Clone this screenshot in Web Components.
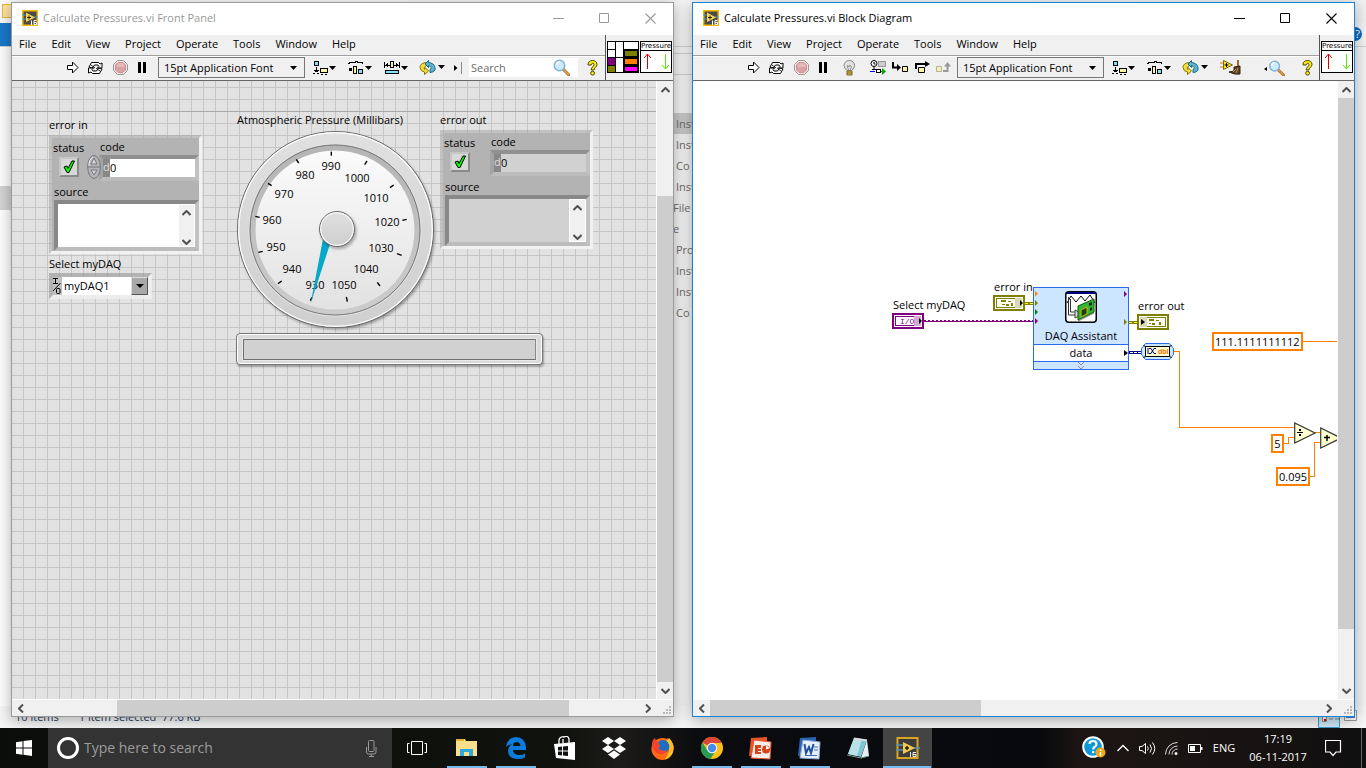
<!DOCTYPE html>
<html lang="en">
<head>
<meta charset="utf-8">
<title>Calculate Pressures.vi</title>
<style>
html, body { margin: 0; height: 100%; }
body { font: 11px/16px "Open Sans", "Noto Sans", sans-serif; color: #000; overflow: hidden; }
.at { position: absolute; }
</style>
</head>
<body>
<desk-top>
  <file-explorer slot="back"></file-explorer>
  <lv-window heading="Calculate Pressures.vi Front Panel" vscroll="98 485 0" hscroll="88 451 70" grid>
    <tool-bar slot="toolbar">
      <tool-button icon="run" size="m" label="Run"></tool-button>
      <tool-button icon="loop" size="m" label="Run Continuously"></tool-button>
      <tool-button icon="abort" size="l" label="Abort"></tool-button>
      <tool-button icon="pause" size="s" label="Pause"></tool-button>
      <font-select></font-select>
      <tool-button icon="align" size="xl" label="Align Objects"></tool-button>
      <tool-button icon="distribute" size="xl" label="Distribute Objects"></tool-button>
      <tool-button icon="resize" size="xl" label="Resize Objects"></tool-button>
      <tool-button icon="reorder" size="xl" label="Reorder"></tool-button>
      <tool-button icon="more" size="s" label="More"></tool-button>
      <tool-search></tool-search>
      <tool-button icon="help" size="m" label="Context Help"></tool-button>
    </tool-bar>
    <lv-icon name="pane" slot="corner"></lv-icon>
    <vi-badge slot="corner"></vi-badge>

    <panel-text class="at" style="left:37px;top:36px">error in</panel-text>
    <error-cluster class="at" style="left:37px;top:54px" input></error-cluster>
    <panel-text class="at" style="left:37px;top:175px">Select myDAQ</panel-text>
    <io-picker class="at" style="left:37px;top:192px"></io-picker>
    <panel-text class="at" style="left:225px;top:31px">Atmospheric Pressure (Millibars)</panel-text>
    <pressure-gauge class="at" style="left:221px;top:46px"></pressure-gauge>
    <status-bar class="at" style="left:224px;top:252px"></status-bar>
    <panel-text class="at" style="left:428px;top:31px">error out</panel-text>
    <error-cluster class="at" style="left:428px;top:49px"></error-cluster>
  </lv-window>

  <lv-window heading="Calculate Pressures.vi Block Diagram" vscroll="0 531 53" hscroll="0 271 340" active>
    <tool-bar slot="toolbar">
      <tool-button icon="run" size="m" label="Run"></tool-button>
      <tool-button icon="loop" size="m" label="Run Continuously"></tool-button>
      <tool-button icon="abort" size="l" label="Abort"></tool-button>
      <tool-button icon="pause" size="s" label="Pause"></tool-button>
      <tool-button icon="bulb" size="xl" label="Highlight Execution"></tool-button>
      <tool-button icon="retain" size="m" label="Retain Wire Values"></tool-button>
      <tool-button icon="into" size="m" label="Step Into"></tool-button>
      <tool-button icon="over" size="m" label="Step Over"></tool-button>
      <tool-button icon="out" size="m" label="Step Out"></tool-button>
      <font-select snug></font-select>
      <tool-button icon="align" size="xl" label="Align Objects"></tool-button>
      <tool-button icon="distribute" size="xl" label="Distribute Objects"></tool-button>
      <tool-button icon="reorder" size="xl" label="Reorder"></tool-button>
      <tool-button icon="clean" size="xl" label="Clean Up Diagram"></tool-button>
      <tool-button icon="find" size="xxl" label="Search"></tool-button>
      <tool-button icon="help" size="s" label="Context Help"></tool-button>
    </tool-bar>
    <vi-badge slot="corner"></vi-badge>

    <block-wires class="at" style="left:0;top:0"></block-wires>
    <panel-text class="at" style="left:200px;top:216px">Select myDAQ</panel-text>
    <lv-icon name="termio" class="at" style="left:199px;top:232px"></lv-icon>
    <panel-text class="at" style="left:301px;top:198px">error in</panel-text>
    <lv-icon name="termin" class="at" style="left:300px;top:214px"></lv-icon>
    <daq-node class="at" style="left:340px;top:206px"></daq-node>
    <panel-text class="at" style="left:445px;top:217px">error out</panel-text>
    <lv-icon name="termout" class="at" style="left:444px;top:233px"></lv-icon>
    <lv-icon name="convert" class="at" style="left:448px;top:262px"></lv-icon>
    <num-constant class="at" style="left:519px;top:251px">111.1111111112</num-constant>
    <num-constant class="at" style="left:578px;top:353px">5</num-constant>
    <num-constant class="at" style="left:583px;top:386px">0.095</num-constant>
    <lv-icon name="divide" class="at" style="left:601px;top:341px"></lv-icon>
    <lv-icon name="plus" class="at" style="left:627px;top:346px"></lv-icon>
  </lv-window>
  <task-bar slot="taskbar"></task-bar>
</desk-top>

<script>
const LV = `<rect x=".75" y=".75" width="14.500" height="14.500" fill="#4a4a4a" stroke="#f5b800" stroke-width="1.500"/><path d="M0 5h4M0 9h4M12 7h4" stroke="#3a9ad9"/><path d="M4 2.500v9.500l9-4.500z" fill="#f8d350"/><path d="M7 5.500v4M5 7.500h4" stroke="#222"/><path d="M9.500 10.500v4.500M14.500 10.500h-2.500v4h2.500v-2h-2.500" stroke="#fff" fill="none"/>`;
const GLASS = `<path d="M10 10l6 6" stroke="#b06a28" stroke-width="3" stroke-linecap="round"/><path d="M10 10l6 6" stroke="#e8a850" stroke-width="1.200"/><circle cx="6.500" cy="6.500" r="5.200" fill="#cfeafc" stroke="#7cb4dc" stroke-width="1.500"/><path d="M3.500 6a3 3 0 0 1 3-3" stroke="#fff" stroke-width="1.500" fill="none"/>`;
const ERR = c => `<rect x="1" y="1" width="30" height="14" fill="#fff" stroke="${c}" stroke-width="2"/><rect x="3.500" y="3.500" width="25" height="9" fill="#fff" stroke="${c}"/>`;
// name: [width, height, markup]
const ICONS = {
 lv: [16,16,LV],
 run: [12,13,`<path d="M.5 4.500h5v-3.500l5.500 5.500-5.500 5.500v-3.500h-5z" fill="#fff" stroke="#000"/>`],
 loop: [17,14,`<path d="M2 6l2.500-4.500h7l1.500 1.500 2-1v5H10.500l1.500-1.500-1-1.500H7.500L5.500 7z" fill="#fff" stroke="#000"/><path d="M15 8l-2.500 4.500h-7L4 11l-2.500 1V7H6.500L5 8.500 6 10h3.500L11.500 7z" fill="#fff" stroke="#000"/><path d="M4 4l4 3M9 7l4 3" stroke="#000" stroke-width=".8"/>`],
 abort: [15,15,`<path d="M4.500.5h6l4 4v6l-4 4h-6l-4-4v-6z" fill="#f4e4e4" stroke="#999"/><path d="M5 2.500h5l2.500 2.500v5L10 12.500H5L2.500 10V5z" fill="#dba2a4" stroke="#cf9498"/><path d="M4 5l2-2h3.500l2 2v2H4z" fill="#e8b9bb"/>`],
 pause: [10,11,`<path d="M1 0h3v11H1zM6 0h3v11H6z"/>`],
 align: [23,14,`<g shape-rendering="crispEdges"><path d="M1.500.5h4v4h-4z" fill="#7fe3fb" stroke="#000"/><path d="M7.500 7.500h7v4h-7z" fill="#fdf59c" stroke="#000"/><path d="M3 6h1v3h2v1H5v1H2v-1H1V9h2zM0 12h2v1H0zM4 12h2v1H4zM8 13h2v1H8zM12 13h2v1h-2z"/></g><path d="M16 5h7l-3.500 4z"/>`],
 distribute: [24,14,`<g shape-rendering="crispEdges" fill="none" stroke="#000"><path d="M.5 2.500L2.500 1.500H7V.5h2v1h4.500l2 1"/><path d="M5.500 5.500h3v7h-3z" fill="#fdf59c"/><path d="M10.500 8.500h4v4h-4z" fill="#7fe3fb"/><path d="M1 7h3v3H1z" fill="#000" stroke="none"/></g><path d="M17 5h7l-3.500 4z"/>`],
 resize: [24,14,`<g shape-rendering="crispEdges"><path d="M6.500.5h3v6h-3z" fill="#fdf59c" stroke="#000"/><path d="M.5 1v6M15.500 1v6M1 4h5M10 4h5" stroke="#000"/><path d="M4 2v4L1 4zM12 2v4l3-2z"/><path d="M1.500 9.500h13v2.500h-13z" fill="#7fe3fb" stroke="#000"/></g><path d="M17 5h7l-3.500 4z"/>`],
 reorder: [26,15,`<path d="M7.500 2.500Q1 3 1 7.500q.5 4 4.500 4.500v2.500L9.500 11 6 7.500v2Q3.500 8 7.500 5.500z" fill="#f3df3c" stroke="#857400"/><path d="M9.500 5.500v2L6 4l3.500-3.500V2.500q5.500.5 6.500 5t-5 5V9.500q3-2-1.500-4z" fill="#5cb6d0" stroke="#176b86"/><path d="M19 5h7l-3.500 4z"/>`],
 more: [8,12,`<path d="M0 3v6l3.500-3z"/><path d="M7.500 0v12" stroke="#888"/>`],
 help: [11,16,`<path d="M1 4.500C1 2 3 .5 5.500.5S10 2 10 4.500C10 7 7 7.500 7 10H4.200C4.200 7 7 6.500 7 4.500 7 2.800 4.200 2.800 4.200 5H1z" fill="#f9ec1c" stroke="#4b4500"/><circle cx="5.600" cy="13.200" r="1.900" fill="#f9ec1c" stroke="#4b4500"/>`],
 bulb: [13,16,`<path d="M4 10.500Q1 8 1 5.500a5.300 5 0 0 1 10.600 0Q11.600 8 8.700 10.500z" fill="#e2e2e2" stroke="#888"/><path d="M4.500 5l1.500 2 1-2 1.500 2-1.500 4h-1L4.500 7z" fill="none" stroke="#999"/><path d="M4 11h5v4H4z" fill="#e9c238" stroke="#74632a"/><path d="M4 13h5" stroke="#74632a"/>`],
 retain: [17,15,`<g shape-rendering="crispEdges"><path d="M8.500 1.500h7v5h-7z" fill="#ccc" stroke="#999"/><path d="M0 11.500h5" stroke="#00f"/><path d="M6.500 9.500h4v3h-4z" fill="#fff" stroke="#000"/><path d="M11 11.500h2" stroke="#00a000"/></g><path d="M12 8v7l4-3.500z" fill="#00a000"/><circle cx="4" cy="3.500" r="3" fill="#fff" stroke="#000"/><path d="M4 2v2h1.500M4 7v3M2 9.500h4" stroke="#000" fill="none"/>`],
 into: [17,11,`<path d="M1 0v5.500h6" fill="none" stroke="#000" stroke-width="2"/><path d="M5 2v7l4-3.500z"/><path d="M10.500 4.500h5v5h-5z" fill="#fdf59c" stroke="#000"/>`],
 over: [15,13,`<path d="M1 8V3h10" fill="none" stroke="#000" stroke-width="2"/><path d="M10 0v6l5-3z"/><path d="M3.500 6.500h6v5h-6z" fill="#fdf59c" stroke="#000"/>`],
 out: [16,11,`<path d="M7 9h4.500V3" fill="none" stroke="#999" stroke-width="2"/><path d="M8 4.500h7L11.500 0z" fill="#999"/><path d="M.5 4.500h5v5h-5z" fill="#f4eebc" stroke="#b8b48e"/>`],
 clean: [22,15,`<path d="M0 3h4M0 7h4" stroke="#e87800"/><path d="M18 0v7" stroke="#a06a30" stroke-width="2"/><path d="M14 7l6-1v8q-5 1-11-2l5-1z" fill="#5d4222" stroke="#33220f"/><path d="M13 12l3-3M16 13l2-5" stroke="#c09560"/><path d="M3.500.5v9l9-4.500z" fill="#fbe52c" stroke="#7c6700"/><path d="M6.500 3v4M4.500 5h4" stroke="#000"/>`],
 find: [21,16,`<path d="M3 7v4L0 9z"/><g transform="translate(4.500 0)scale(.94)">${GLASS}</g>`],
 glass: [17,17,GLASS],
 pane: [32,32,`<path d="M0 0h32v32H0z"/><g fill="#fff"><path d="M1 1h7v7H1zM1 9h7v7H1zM9 1h7v15H9zM9 17h7v14H9zM17 1h14v7H17z"/></g><path d="M1 17h7v7H1z" fill="#800080"/><path d="M1 25h7v6H1zM18 10h12v5H18z" fill="#808000"/><path d="M18 18h12v5H18z" fill="#ff8000"/><path d="M18 26h12v4H18z" fill="#f0f"/>`],
 check: [12,14,`<path d="M1 7l3-1 1 2.500L9 1h2.500L6 12.500H4z" fill="#0f0" stroke="#000"/>`],
 spin: [14,24,`<ellipse cx="7" cy="12" rx="6.300" ry="11.500" fill="#b2b4ba" stroke="#74767c"/><path d="M1 12h12" stroke="#777"/><path d="M4 9l3-6 3 6zM4 15l3 5 3-5z" fill="#d6d6da" stroke="#777"/><path d="M2 11q-.5-6 4-9" stroke="#eee" fill="none"/>`],
 io: [9,17,`<path d="M0 .5h5M2.500 0v5M0 5.500h5M0 13L7.500 5" stroke="#000" fill="none"/><rect x="3.500" y="10.500" width="3.500" height="5" rx="1" fill="none" stroke="#000"/>`],
 termio: [32,16,`<rect x="1" y="1" width="30" height="14" fill="#fff" stroke="#800080" stroke-width="2"/><rect x="3.500" y="3.500" width="25" height="9" fill="#fff" stroke="#800080"/><path d="M22 3h7v10h-7z" fill="#d3a8d3"/><path d="M27 5v6l3-3z"/><text x="8" y="11" font-family="Liberation Mono, monospace" font-size="8" fill="#800080">I/O</text>`],
 termin: [32,16,ERR('#808000')+`<path d="M22 3h7v10h-7z" fill="#d9d9b4"/><path d="M27 5v6l3-3z"/><path d="M8 5h5v2H8zM15 6h3v1h-3zM9 9h3v1H9zM13 9h3v2h-3zM18 8h2v3h-2z" fill="#808000"/>`],
 termout: [32,16,ERR('#808000')+`<path d="M3 3h7v10H3z" fill="#d9d9b4"/><path d="M4 5v6l4-3z"/><path d="M12 5h5v2h-5zM19 6h3v1h-3zM12 9h2v1h-2zM15 9h3v2h-3zM22 8h2v3h-2z" fill="#808000"/>`],
 convert: [33,17,`<path d="M4.500.5h24l4 5v6l-4 5h-24l-4-5v-6z" fill="#cce6ff" stroke="#2c6af0"/><path d="M4.500 3.500h24v10h-24z" fill="#ffffcf" stroke="#000"/><path d="M2.500 2L4.500 4v9L2.500 15M30.500 2L28.500 4v9l2 2" stroke="#000" fill="none"/><path d="M8 5.500h2l3 5h2M8 10.500h2l3-5h2M7 5v6" stroke="#00007a" fill="none"/><text x="17" y="11" font-family="Liberation Sans, sans-serif" font-size="7" font-weight="bold" fill="#ff6a00">dbl</text>`],
 divide: [22,22,`<path d="M.7 1v20L21 11z" fill="#ffffcf" stroke="#3a3a3a" stroke-width="1.200"/><path d="M3 10.500h6" stroke="#000"/><path d="M5 7h2v2H5zM5 12h2v2H5z"/>`],
 plus: [22,22,`<path d="M.7 1v20L21 11z" fill="#ffffcf" stroke="#3a3a3a" stroke-width="1.200"/><path d="M4 10.500h6M7 8v6" stroke="#000" stroke-width="1.500"/>`],
 daq: [32,32,`<rect x=".75" y=".75" width="30.500" height="30.500" rx="3" fill="#fff" stroke="#000" stroke-width="1.500"/><path d="M2 1h28v2H2z" fill="#000080"/><path d="M2 12l4-7 5 6 5-6 4 5 5-6 5 8" fill="none" stroke="#000"/><path d="M3.500 6v18h7M5.500 8v13h5" fill="none" stroke="#333"/><path d="M10 19l4 2v4l-4 2z" fill="#ddd" stroke="#444"/><path d="M13 15l16-7v13l-16 8z" fill="#35b535" stroke="#055a05"/><path d="M16 19l6-3v7l-6 3z" fill="#141" stroke="#e0b000"/><path d="M24 12l3-1v3l-3 1zM25 17l2-1v3l-2 1z" fill="#222"/><path d="M13 30l16-8" stroke="#777"/>`],
 min: [11,11,`<path d="M0 5.500h11" stroke="currentColor"/>`],
 max: [11,11,`<path d="M.5.5h9v9h-9z" fill="none" stroke="currentColor"/>`],
 close: [11,11,`<path d="M.5.5l10 10M10.500.5l-10 10" stroke="currentColor" stroke-width="1.100"/>`],
 start: [16,16,`<path d="M0 2.300l6.500-1v6.200H0zM7.500 1.100L16 0v7.500H7.500zM0 8.500h6.500v6.200L0 13.700zM7.500 8.500H16V16l-8.500-1.200z" fill="#fff"/>`],
 mic: [11,17,`<rect x="2.500" y=".5" width="5.500" height="11" rx="1" fill="none" stroke="#999"/><path d="M.5 7v5q0 2 2 2H8q2 0 2-2V7M5.200 14v3M3 16.500h5" fill="none" stroke="#999"/>`],
 view: [20,14,`<path d="M4.500.5h11v13h-11zM2.500 2.500h-2v9h2M17.500 2.500h2v9h-2" fill="none" stroke="#fff"/>`],
 folder: [22,20,`<path d="M0 1h9l1 2h11v15H0z" fill="#fbe08c"/><path d="M0 1h8v2H0z" fill="#e2b13c"/><path d="M4 18v-7h13v7h-4v-4H8v4z" fill="#2ea9e0"/>`],
 edge: [20,22,`<path d="M0 10Q1 1 10 0q9 .5 10 10v3H7q0 4 5 5 4 .5 7-1.500v4Q16 22 11 22 2 21 2 14q0-4 4-7-4 1-6 3zM7 9h7.500Q14 5 10.500 5T7 9z" fill="#0d7bdc"/>`],
 store: [21,24,`<path d="M0 8l21-2v18L2 22z" fill="#fff"/><path d="M5 8V4q1-4 5-3 4-2 5 2v4M9 7V3" fill="none" stroke="#fff" stroke-width="1.300"/><path d="M4 11l4-.5v4H4zM9 10.500l5-.5v4.500H9zM4 15.500h4v4L4 19zM9 15.500h5V20l-5-.5z" fill="#111"/>`],
 dropbox: [24,22,`<path d="M6 0l6 4-6 4-6-4zM18 0l6 4-6 4-6-4zM6 8l6 4-6 4-6-4zM18 8l6 4-6 4-6-4zM12 13.500l6 4-6 4.500-6-4.500z" fill="#fff"/>`],
 firefox: [23,23,`<circle cx="11.500" cy="12" r="11" fill="#ff6a13"/><path d="M18 1q5 5 4.500 11-1 8-9 10.500Q22 14 15 5z" fill="#ffd42a"/><circle cx="12" cy="9.500" r="6.500" fill="#1a6fc4"/><path d="M1 7Q1 3 4 1l1 3q2 0 3 2-1 2 2 2l-2 2v2q3 3 8 1-2 5-8 4-6-2-7-10z" fill="#f7432b"/><path d="M16 1q3 4 3 9 0 5-4 8 8-2 7.500-9Q21 4 16 1z" fill="#ffb62a"/>`],
 chrome: [22,22,`<circle cx="11" cy="11" r="11" fill="#fbc116"/><path d="M11 11L1.500 5.500A11 11 0 0 1 20.500 5.500L21 6H11z" fill="#dc4437"/><path d="M1.500 5.500A11 11 0 0 0 9.500 22L15 13H6z" fill="#279b56"/><circle cx="11" cy="11" r="5.200" fill="#fff"/><circle cx="11" cy="11" r="4.200" fill="#4a89ee"/>`],
 ppt: [24,23,`<path d="M2 1l16-1v17L0 19z" fill="#e8532a"/><path d="M5 3l17 2-1 17-19-1z" fill="#f9eee8" stroke="#e8532a"/><path d="M6 8h6v3H9v1h3v2H9v1h3v2H6z" fill="#d6421c"/><circle cx="17" cy="12.500" r="4" fill="#d6421c"/><path d="M17 12.500V8.500l4 2.500z" fill="#fff"/>`],
 word: [24,23,`<path d="M2 1l16-1v17L0 19z" fill="#2d62b5"/><path d="M5 3l17 2-1 17-19-1z" fill="#e9f0fa" stroke="#88a9d8"/><path d="M6.500 7l1.500 9 3-6 2 6 2.500-9" fill="none" stroke="#1f4f9f" stroke-width="2"/><path d="M16 10h4M16 13h4M7 18.500h12" stroke="#3b6cb8"/>`],
 note: [23,22,`<path d="M7 1l13 2-6 17L1 17z" fill="#7fc4d4"/><path d="M7 1l8 1-5 17-9-2z" fill="#b9e2e8"/><path d="M20 3l2 16-8 2z" fill="#e5eef0"/><path d="M0 18l14 3 8-2" stroke="#798" fill="none"/><path d="M7 1.500l13 2" stroke="#d8dede" stroke-width="2"/>`],
 lvbig: [24,22,`<rect x="1.500" y="1" width="20" height="20" fill="#3c3c3c" stroke="#d9a520" stroke-width="2"/><path d="M0 8h7M0 13h7M17 11h7" stroke="#4a90b8" stroke-width="1.500"/><path d="M7 5v12l12-6z" fill="#f2c94c"/><path d="M9 11h4M11 9v4" stroke="#222" stroke-width="1.500"/><path d="M14.500 15v5M20 15.500h-3v4h3v-2h-3" stroke="#eee" fill="none"/>`],
 q: [25,24,`<circle cx="11" cy="11" r="9.800" fill="#0c97d8" stroke="#fff" stroke-width="2"/><path d="M7.500 8q0-3 3.500-3t3.500 3q0 2-2 3-1.200.6-1.200 2.500M11.200 15v2.200" fill="none" stroke="#fff" stroke-width="2.200"/><circle cx="18.500" cy="16.500" r="5" fill="#f0a818"/><path d="M18.500 13.500v1.500M18.500 16v4" stroke="#fff" stroke-width="1.500"/>`],
 up: [12,8,`<path d="M.5 7L6 1.500 11.500 7" fill="none" stroke="#fff" stroke-width="1.300"/>`],
 vol: [17,13,`<path d="M.5 4.500H3l3.500-3v10L3 8.500H.5z" fill="none" stroke="#fff"/><path d="M8.500 4.500q1.500 2 0 4M11 2.500q3 4 0 8M13.500.5q4.500 6 0 12" fill="none" stroke="#fff"/>`],
 wifi: [13,13,`<path d="M.5 12.500A12 12 0 0 1 12.500.5M4 12.500A8.500 8.500 0 0 1 12.500 4M7 12.500A5.500 5.500 0 0 1 12.500 7" fill="none" stroke="#ddd"/><circle cx="11" cy="11.500" r="1.500" fill="#fff"/>`],
 bat: [15,9,`<path d="M.5.5h12v8H.5z" fill="none" stroke="#fff"/><path d="M2 2h5v5H2zM13 3h1.500v3H13z" fill="#fff"/>`],
 note2: [17,17,`<path d="M.5.5h15v11.500h-4.500L8 15.500 5 12H.5z" fill="none" stroke="#fff" stroke-width="1.200"/>`],
 au: [9,6,`<path d="M.5 5l4-4 4 4" fill="none" stroke="#505050" stroke-width="2"/>`],
 ad: [9,6,`<path d="M.5 1l4 4 4-4" fill="none" stroke="#505050" stroke-width="2"/>`],
 al: [6,9,`<path d="M5 .5l-4 4 4 4" fill="none" stroke="#505050" stroke-width="2"/>`],
 ar: [6,9,`<path d="M1 .5l4 4-4 4" fill="none" stroke="#505050" stroke-width="2"/>`],
 grip: [9,9,`<path d="M6 0h2v2H6zM3 3h2v2H3zM6 3h2v2H6zM0 6h2v2H0zM3 6h2v2H3zM6 6h2v2H6z" fill="#b8b8b8"/>`],
};
const svg = n => { const [w,h,m] = ICONS[n]; return `<svg width="${w}" height="${h}" viewBox="0 0 ${w} ${h}" aria-hidden="true">${m}</svg>`; };
const BASE = `*{box-sizing:border-box} :host{display:block;box-sizing:border-box} svg{display:block;flex:none} button,input,select,textarea{font:inherit;color:inherit;border:0;margin:0;padding:0;background:none;border-radius:0;outline:0}`;
function define(name, css, html) {
  customElements.define(name, class extends HTMLElement {
    constructor() { super(); this.attachShadow({ mode: 'open' }); }
    connectedCallback() {
      this.shadowRoot.innerHTML = `<style>${BASE}${css}</style>` + (typeof html === 'function' ? html(this) : html);
    }
  });
}

define('lv-icon', ``, e => svg(e.getAttribute('name')));

define('desk-top', `
 :host{position:relative;display:grid;grid-template-rows:1fr 40px;height:100vh;overflow:hidden}
 .back{position:absolute;inset:0 0 40px 0}
 .windows{position:relative;display:grid;grid-template-columns:1fr 1fr;gap:18px;padding:2px 11px 11px;min-height:0}
 .bar{position:relative}`,
 `<div class="back"><slot name="back"></slot></div><div class="windows"><slot></slot></div><div class="bar"><slot name="taskbar"></slot></div>`);

define('file-explorer', `
 :host{height:100%;position:relative;background:#fff;display:grid;grid-template-rows:23px 23px 1fr 22px;overflow:hidden}
 .top{background:linear-gradient(90deg,#fafafa,#f0f0f0)} .ribbon{background:linear-gradient(90deg,#1979ca 0 12px,#f3f3f3 12px)}
 .body{display:grid;grid-template-columns:11px 1fr 11px;position:relative;border-top:1px solid #d0d0d0}
 .mark{position:absolute;left:2px;top:4px;width:12px;height:14px;background:#fbe3a0;border:1px solid #e8b83c}
 .tree{padding-top:139px} .tree i{display:block;height:24px;background:#d4d4d4}
 .list{margin-left:662px;width:40px;color:#6d6d6d;background:#f3f3f3;padding-top:66px;position:relative}
 .list div{line-height:21px;padding-left:3px} .list .sel{background:#c9c9c9} .list .out{padding-left:0}
 .rule{position:absolute;left:0;width:40px;height:1px;background:#cfcfcf;top:6px} .rule.b{top:27px}
 .side{background:#f3f3f3}
 .q{position:absolute;right:4px;top:27px;width:14px;height:14px;border-radius:7px;background:#1068c0;color:#fff;line-height:14px;text-align:right;padding-right:2px}
 .status{display:flex;gap:20px;padding-left:15px;color:#1e395b;line-height:16px;align-items:flex-start;background:#f6f6f6}
 .status span{margin-top:3px;white-space:pre}
 .views{margin-left:auto;margin-right:8px}`,
 `<div class="top"><div class="mark"></div></div><div class="ribbon"></div>
 <div class="body"><div class="tree"><i></i></div>
 <div class="list"><div class="rule"></div><div class="rule b"></div>
 <div class="sel">Inst</div><div>Inst</div><div>Co</div><div>Inst</div><div class="out">File</div><div class="out">e</div><div>Pro</div><div>Inst</div><div>Inst</div><div>Co</div></div><div class="side"></div></div>
 <div class="q">?</div>
 <div class="status"><span>10 items</span><span>1 item selected  77.6 KB</span><svg class="views" width="40" height="22"><path d="M.5.500h21v21H.5z" fill="#cde8f7" stroke="#3a9ad0"/><path d="M4.500 8.500h4v7h-4zM11 13h4M17 13h4" fill="#fff" stroke="#888"/><path d="M6 13h2v2H6z" fill="#d00"/><path d="M26.500 4.500h12v10h-12z" fill="#fff" stroke="#999"/><path d="M28 6h9v6h-9z" fill="#4a80bb"/></svg></div>`);

define('scroll-bar', `
 :host{display:flex;background:#f0f0f0}
 button{width:17px;height:17px;display:flex;align-items:center;justify-content:center;flex:none}
 .track{flex:1;display:flex} .thumb{background:#cdcdcd}
 :host([dir=v]),:host([dir=v]) .track{flex-direction:column}
 :host([dir=v]) button{width:auto} :host([dir=h]) button{height:auto}`,
 e => { const v = e.getAttribute('dir') === 'v', [a,b,c] = e.getAttribute('parts').split(' ');
  return `<button aria-label="Back">${svg(v?'au':'al')}</button><div class="track"><div style="flex:${a} 0 0"></div><div class="thumb" style="flex:${b} 0 0"></div><div style="flex:${c} 0 0"></div></div><button aria-label="Forward">${svg(v?'ad':'ar')}</button>`; });

define('lv-window', `
 :host{display:grid;grid-template-rows:32px auto 1fr 17px;border:1px solid #9a9a9a;background:#fff;box-shadow:0 3px 14px rgba(0,0,0,.32);min-width:0;overflow:hidden}
 :host([active]){border-color:#1883d7}
 .title{display:flex;align-items:center;padding:0 0 2px 10px;color:#999}
 :host([active]) .title{color:#000}
 .title h1{font:inherit;margin:0 auto 0 5px;white-space:nowrap}
 .title button{width:46px;height:30px;display:flex;align-items:center;justify-content:center}
 .head{display:grid;grid-template-columns:1fr auto;background:#f0f0f0;border-bottom:1px solid #666}
 nav{display:flex;gap:15px;padding-left:7px;height:21px;border-bottom:1px solid #a0a0a0;line-height:18px}
 nav a{color:#000;text-decoration:none}
 .corner{grid-column:2;grid-row:1/3;display:flex;gap:1px;border-left:1px solid #555;padding:6px 1px 0}
 .view{display:grid;grid-template-columns:1fr 16px;min-height:0}
 .canvas{position:relative;overflow:hidden;border-right:1px solid #fff}
 :host([grid]) .canvas{background:linear-gradient(#a9a9a9,#a9a9a9) 0 30px/100% 1px no-repeat,repeating-linear-gradient(90deg,transparent 0 11px,#c6c6c6 11px 12px),repeating-linear-gradient(transparent 0 6px,#c6c6c6 6px 7px,transparent 7px 12px),#e2e2e2}
 .foot{display:grid;grid-template-columns:1fr 17px;border-top:1px solid #fff;background:#f0f0f0;align-items:stretch}
 .grip{display:flex;align-items:flex-end;justify-content:flex-end;padding:0 1px 1px 0}`,
 e => `<div class="title">${svg('lv')}<h1>${e.getAttribute('heading')}</h1><button aria-label="Minimize">${svg('min')}</button><button aria-label="Maximize">${svg('max')}</button><button aria-label="Close">${svg('close')}</button></div>
 <div class="head"><nav>${['File','Edit','View','Project','Operate','Tools','Window','Help'].map(t=>`<a href="#">${t}</a>`).join('')}</nav><slot name="toolbar"></slot><div class="corner"><slot name="corner"></slot></div></div>
 <div class="view"><div class="canvas"><slot></slot></div><scroll-bar dir="v" parts="${e.getAttribute('vscroll')}"></scroll-bar></div>
 <div class="foot"><scroll-bar dir="h" parts="${e.getAttribute('hscroll')}"></scroll-bar><div class="grip">${svg('grip')}</div></div>`);

define('tool-bar', `:host{display:flex;align-items:center;height:24px;padding:0 0 2px 50px;border-top:1px solid #fff;min-width:0}`, `<slot></slot>`);
define('tool-button', `
 :host{flex:none;width:22px} :host([size=s]){width:16px} :host([size=l]){width:28px} :host([size=xl]){width:36px} :host([size=xxl]){width:50px}
 button{width:100%;height:20px;display:flex;align-items:center;justify-content:center}`,
 e => `<button aria-label="${e.getAttribute('label')}">${svg(e.getAttribute('icon'))}</button>`);
define('font-select', `
 :host{position:relative;flex:none;width:147px;height:21px;margin:0 1px 0 8px;border:1px solid #777}
 :host([snug]){margin-left:2px}
 select{appearance:none;width:100%;height:19px;padding:0 0 0 5px;line-height:18px;display:block}
 svg{position:absolute;right:6px;top:8px;pointer-events:none}`,
 `<select aria-label="Text Settings"><option>15pt Application Font</option></select><svg width="8" height="5"><path d="M0 0h7L3.500 4z"/></svg>`);
define('tool-search', `
 :host{display:flex;align-items:center;flex:none;width:109px;height:19px;margin:0 3px;background:#fff;padding:0 8px 0 2px}
 input{width:82px;flex:1;line-height:18px} input::placeholder{color:#6d6d6d;opacity:1}`,
 `<input aria-label="Search" placeholder="Search">${svg('glass')}`);
define('vi-badge', `
 :host{width:32px;height:32px;border:1px solid #000;background:#fff;display:flex;flex-direction:column}
 span{font:7px/8px "DejaVu Sans",sans-serif;border-bottom:1px solid #000;height:9px;text-align:center}`,
 `<span>Pressure</span><svg width="30" height="21"><path d="M6.500 18V3M3 7l3.500-4L10 7" fill="none" stroke="#d40000"/><path d="M24.500 3v15M21 14l3.500 4 3.500-4" fill="none" stroke="#5ce600"/></svg>`);

define('panel-text', `:host{white-space:nowrap}`, `<slot></slot>`);
define('error-cluster', `
 :host{width:153px;height:119px;border:3px solid;border-color:rgba(170,170,170,.6) rgba(245,245,245,.85) rgba(245,245,245,.85) rgba(170,170,170,.6);background:#b3b3b3;background-clip:padding-box;display:flex;flex-direction:column}
 .row{display:grid;grid-template-columns:35px 12px minmax(0,1fr)}
 .st{padding:2px 0 0 1px} .cd{grid-column:3;padding-top:1px}
 .cd label{padding-left:1px}
 .led{display:flex;width:20px;height:20px;align-items:center;justify-content:center;margin:1px 0 0 6px;background:#d8d8d8;border:2px solid;border-color:#c6c6c6 #8a8a8a #8a8a8a #c6c6c6}
 .sp{position:absolute;z-index:1;margin:17px 0 0 35px}
 .num{display:flex;height:26px;border:4px solid;border-color:#909090 #c2c2c2 #bcbcbc #a4a4a4;background:#888;}
 .num i{font-style:normal;color:#ddd;width:7px;line-height:16px}
 .num input{flex:1;min-width:0;background:#fff;padding-left:0;height:18px;line-height:18px}
 .src{padding-left:2px;line-height:16px;margin-top:3px}
 .box{flex:1;margin-left:2px;display:flex;border:4px solid;border-color:#888 #c2c2c2 #bcbcbc #888;background:#fff;min-height:0}
 textarea{flex:1;min-width:0;resize:none;overflow:hidden} .box div{width:17px;background:#f0f0f0;display:flex;flex-direction:column;align-items:center;justify-content:space-between;padding:5px 0 1px;border:1px solid #fff}
 :host(:not([input])) .num input,:host(:not([input])) .box{background:#d1d1d1}`,
 e => `<div class="row"><div class="st"><label>status</label><div class="led" role="img" aria-label="no error">${svg('check')}</div></div>${e.hasAttribute('input')?`<span class="sp">${svg('spin')}</span>`:''}<div class="cd"><label for="c">code</label><div class="num"><i>d</i><input id="c" value="0"${e.hasAttribute('input')?'':' readonly'}></div></div></div>
 <label class="src" for="t">source</label><div class="box"><textarea id="t"${e.hasAttribute('input')?'':' readonly'}></textarea><div>${svg('au')}${svg('ad')}</div></div>`);
define('io-picker', `
 :host{display:flex;width:103px;height:26px;border:4px solid;border-color:rgba(160,160,160,.7) rgba(240,240,240,.8) rgba(240,240,240,.8) rgba(160,160,160,.7);background:#c2c2c2;background-clip:padding-box}
 svg{margin:1px 0 0 0} select{appearance:none;flex:1;min-width:0;background:#fff;padding-left:2px;height:18px}
 .d{width:17px;height:18px;background:#a8a8a8;border:1px solid;border-color:#ddd #555 #555 #ddd;display:flex;align-items:center;justify-content:center;pointer-events:none}`,
 `${svg('io')}<select aria-label="Select myDAQ"><option>myDAQ1</option></select><div class="d"><svg width="8" height="5"><path d="M0 0h8L4 4z"/></svg></div>`);
define('status-bar', `
 :host{width:307px;height:32px;padding:5px 6px 4px;border:1px solid #777;border-radius:4px;background:#dadada;box-shadow:inset 0 0 0 1px #fff,1px 2px 2px rgba(0,0,0,.3)}
 div{height:100%;border:1px solid #707070;border-right-color:#888;background:#d1d1d1;box-shadow:0 0 0 1px #e9e9e9}`, `<div></div>`);

const TICKS = [[304,140,304,152],[199,163,206,174],[114,235,125,242],[76,334,89,337],[85,442,98,439],[144,536,155,528],[241,587,246,577],[349,576,352,590],[442,532,450,543],[501,446,515,451],[517,346,530,343],[480,248,491,240],[404,179,411,168]];
const NUMS = [[990,331,166],[980,305,175],[970,284,194],[960,272,220],[950,276,247],[940,292,269],[930,315,285],[1050,344,285],[1040,366,269],[1030,381,248],[1020,387,222],[1010,376,198],[1000,357,178]];
define('pressure-gauge', `text{font-size:11px;text-anchor:middle}`,
 `<svg width="208" height="208" viewBox="233 127 208 208" role="img" aria-label="Atmospheric pressure">
 <defs><linearGradient id="g" x1="0" y1="0" x2="0" y2="1"><stop offset="0" stop-color="#e0e0e0"/><stop offset="1" stop-color="#cfcfcf"/></linearGradient>
 <linearGradient id="f" x1="0" y1="0" x2="0" y2="1"><stop offset="0" stop-color="#fbfbfb"/><stop offset="1" stop-color="#e2e2e2"/></linearGradient>
 <linearGradient id="r" x1="0" y1="0" x2="0" y2="1"><stop offset="0" stop-color="#b4b4b4"/><stop offset="1" stop-color="#cdcdcd"/></linearGradient>
 <filter id="b" x="-20%" y="-20%" width="140%" height="140%"><feGaussianBlur stdDeviation="1.500"/></filter></defs>
 <circle cx="337" cy="231.500" r="98" fill="#000" opacity=".35" filter="url(#b)"/>
 <circle cx="335.500" cy="229.500" r="98" fill="url(#g)" stroke="#666"/><circle cx="335.500" cy="229.500" r="96.800" fill="none" stroke="#fff" stroke-width="1.200"/>
 <circle cx="335" cy="230" r="86" fill="url(#r)" stroke="#e6e6e6"/><circle cx="335" cy="230" r="85" fill="none" stroke="#777"/>
 <circle cx="335" cy="230" r="79.500" fill="url(#f)"/>
 ${TICKS.map(([a,b,c,d])=>`<path d="M${230+a/3} ${105+b/3}L${230+c/3} ${105+d/3}" stroke="#000" stroke-width="1.400"/>`).join('')}
 ${NUMS.map(([n,x,y])=>`<text x="${x}" y="${y+4}">${n}</text>`).join('')}
 <path d="M323 239l7 5L310.500 304z" fill="#06a9c7"/>
 <circle cx="338.500" cy="231" r="18" opacity=".3" filter="url(#b)"/><circle cx="337" cy="229" r="17.500" fill="#fff" stroke="#666"/><circle cx="337" cy="229" r="15.800" fill="url(#g)"/></svg>`);

define('block-wires', ``, `<svg width="645" height="617" viewBox="693 81 645 617" fill="none" shape-rendering="crispEdges">
 <path d="M924 321.500H1033" stroke="#800080"/><path d="M924 320.500H1033" stroke="#800080" stroke-dasharray="2 2"/>
 <path d="M1025 303.500h8M1129 322.500h8" stroke="#808000" stroke-width="3"/><path d="M1025 303.500h8M1129 322.500h8" stroke="#ff0" stroke-dasharray="3 2"/>
 <path d="M1129 352.500h13" stroke="#000080" stroke-width="3"/><path d="M1130 352.500h12" stroke="#fff" stroke-dasharray="3 1"/>
 <g stroke="#ff8000"><path d="M1174 351.500h5.500v76H1294M1284 443.500h4.500v-6h5.500M1315 432.500h5M1310 476.500h4.500v-34h5.500M1300 341.500h37"/></g></svg>`);
define('daq-node', `
 :host{width:96px;height:83px;border:1px solid #2c6af0;background:#cce6ff;display:flex;flex-direction:column;text-align:center}
 .top{flex:1;display:flex;flex-direction:column;align-items:center;padding-top:3px} .data{height:18px;line-height:16px;background:#fff;border:1px solid #2c6af0;border-width:1px 0}
 .top div{line-height:16px;margin-top:5px} .more{height:8px;display:flex;justify-content:center} .pins{position:absolute;left:0;top:0}`,
 `<div class="top">${svg('daq')}<div>DAQ Assistant</div></div><div class="data">data</div><div class="more"><svg width="8" height="8"><path d="M1 0l3 3 3-3M1 4l3 3 3-3" stroke="#889" fill="none"/></svg></div>
 <svg class="pins" width="94" height="81"><path d="M1 3l3 2.500-3 3z" fill="#ff8000"/><path d="M1 12l3 3-3 3zM90 31l3 3-3 3z" fill="#808000"/><path d="M1 21l3 3-3 3z" fill="#008000"/><path d="M1 30l3 3-3 3zM90 3l3 3-3 3z" fill="#800080"/><path d="M90 62l4 3-4 3z"/></svg>`);
define('num-constant', `:host{border:2px solid #ff8000;background:#fff;height:19px;line-height:15px;padding:0 1px;min-width:13px;white-space:nowrap;text-align:center}`, `<slot></slot>`);

const APPS = [['folder','File Explorer',1],['edge','Edge',1],['store','Store'],['dropbox','Dropbox'],['firefox','Firefox'],['chrome','Chrome',1],['ppt','PowerPoint',1],['word','Word',1],['note','Notepad'],['lvbig','LabVIEW',2]];
define('task-bar', `
 :host{height:40px;background:linear-gradient(90deg,#0a0d09,#10120e 560px,#1c1b19 620px,#0b0c0f 700px,#08090c 1040px,#1c1513 1080px,#191413 1200px,#100f0f);color:#fff;display:flex}
 button{display:flex;align-items:center;justify-content:center;width:49px;height:40px;flex:none}
 .start{width:48px}
 .search{display:flex;align-items:center;width:344px;background:#333;padding:0 15px 0 9px;flex:none}
 .ring{width:22px;height:22px;border:3px solid #fff;border-radius:50%;flex:none}
 input{flex:1;min-width:0;font-size:14px;line-height:20px;padding-left:5px} input::placeholder{color:#9b9b9b;opacity:1}
 .apps{display:flex;padding-left:1px;width:492px;flex:none}
 .on{background:linear-gradient(#76b9ed,#76b9ed) 50% 100%/40px 2px no-repeat}
 .cur{background:linear-gradient(#76b9ed,#76b9ed) 0 100%/48px 2px no-repeat,#444}
 .tray{display:flex;align-items:center;margin-left:auto;padding-right:4px}
 .tray button{width:24px} .tray .q{width:34px} .tray .lang{width:34px}
 .clock{width:74px;text-align:center;line-height:18px}
 .tray .n{width:36px} .tray .end{width:1px;height:40px;background:#666;margin-left:10px}`,
 `<button class="start" aria-label="Start">${svg('start')}</button><label class="search"><span class="ring"></span><input aria-label="Search" placeholder="Type here to search">${svg('mic')}</label><button aria-label="Task View">${svg('view')}</button>
 <div class="apps">${APPS.map(([i,l,o])=>`<button aria-label="${l}" class="${o==2?'cur':o?'on':''}">${svg(i)}</button>`).join('')}</div>
 <div class="tray"><button class="q" aria-label="Help">${svg('q')}</button><button aria-label="Show hidden icons">${svg('up')}</button><button aria-label="Volume">${svg('vol')}</button><button aria-label="Network">${svg('wifi')}</button><button aria-label="Battery">${svg('bat')}</button><button class="lang">ENG</button><div class="clock">17:19<br>06-11-2017</div><button class="n" aria-label="Notifications">${svg('note2')}</button><div class="end"></div></div>`);
</script>
</body>
</html>
